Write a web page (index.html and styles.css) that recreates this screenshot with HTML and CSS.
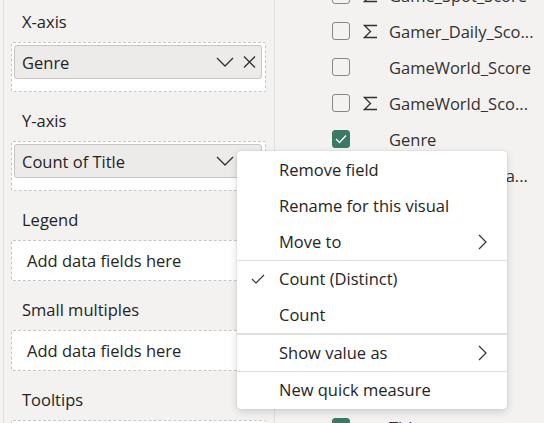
FILE: index.html
```html
<!DOCTYPE html>
<html lang="en">
<head>
<meta charset="utf-8">
<title>Visual fields</title>
<link rel="stylesheet" href="styles.css">
</head>
<body>
<div class="app">
  <div class="fields">
    <section class="well">
      <div class="well-label">X-axis</div>
      <div class="drop drop-filled">
        <div class="pill">
          <span class="pill-name">Genre</span>
          <span class="pill-icons">
            <svg class="chev-down" width="18" height="10" viewBox="0 0 18 10"><path d="M1 1L9 9L17 1" fill="none" stroke="#323130" stroke-width="1.3"/></svg>
            <svg class="close" width="13" height="12" viewBox="0 0 13 12"><path d="M1 0.5L12 11.5M12 0.5L1 11.5" fill="none" stroke="#323130" stroke-width="1.3"/></svg>
          </span>
        </div>
      </div>
    </section>
    <section class="well">
      <div class="well-label">Y-axis</div>
      <div class="drop drop-filled">
        <div class="pill">
          <span class="pill-name">Count of Title</span>
          <span class="pill-icons">
            <svg class="chev-down" width="18" height="10" viewBox="0 0 18 10"><path d="M1 1L9 9L17 1" fill="none" stroke="#323130" stroke-width="1.3"/></svg>
            <svg class="close" width="13" height="12" viewBox="0 0 13 12"><path d="M1 0.5L12 11.5M12 0.5L1 11.5" fill="none" stroke="#323130" stroke-width="1.3"/></svg>
          </span>
        </div>
      </div>
    </section>
    <section class="well">
      <div class="well-label">Legend</div>
      <div class="drop drop-empty">Add data fields here</div>
    </section>
    <section class="well">
      <div class="well-label">Small multiples</div>
      <div class="drop drop-empty">Add data fields here</div>
    </section>
    <section class="well">
      <div class="well-label">Tooltips</div>
      <div class="drop drop-empty">Add data fields here</div>
    </section>
  </div>

  <div class="data">
    <ul class="field-list">
      <li class="field"><span class="cb"></span><span class="slot"><svg width="15" height="15" viewBox="0 0 15 15"><path d="M14 1.5H1.5L7.5 7.5L1.5 13.5H14" fill="none" stroke="#323130" stroke-width="1.3"/></svg></span><span class="fname">Game_Spot_Score</span></li>
      <li class="field"><span class="cb"></span><span class="slot"><svg width="15" height="15" viewBox="0 0 15 15"><path d="M14 1.5H1.5L7.5 7.5L1.5 13.5H14" fill="none" stroke="#323130" stroke-width="1.3"/></svg></span><span class="fname">Gamer_Daily_Sco...</span></li>
      <li class="field"><span class="cb"></span><span class="slot"></span><span class="fname">GameWorld_Score</span></li>
      <li class="field"><span class="cb"></span><span class="slot"><svg width="15" height="15" viewBox="0 0 15 15"><path d="M14 1.5H1.5L7.5 7.5L1.5 13.5H14" fill="none" stroke="#323130" stroke-width="1.3"/></svg></span><span class="fname">GameWorld_Sco...</span></li>
      <li class="field"><span class="cb cb-on"><svg width="12" height="10" viewBox="0 0 12 10"><path d="M1 5L4.5 8.5L11 1.5" fill="none" stroke="#fff" stroke-width="1.4"/></svg></span><span class="slot"></span><span class="fname">Genre</span></li>
      <li class="field"><span class="cb"></span><span class="slot"><svg width="15" height="15" viewBox="0 0 15 15"><path d="M14 1.5H1.5L7.5 7.5L1.5 13.5H14" fill="none" stroke="#323130" stroke-width="1.3"/></svg></span><span class="fname">Global_Score_Va...</span></li>
      <li class="field"><span class="cb"></span><span class="slot"></span><span class="fname">Platform</span></li>
      <li class="field"><span class="cb"></span><span class="slot"></span><span class="fname">Publisher</span></li>
      <li class="field"><span class="cb"></span><span class="slot"></span><span class="fname">Rating</span></li>
      <li class="field"><span class="cb"></span><span class="slot"></span><span class="fname">Region</span></li>
      <li class="field"><span class="cb"></span><span class="slot"></span><span class="fname">Release</span></li>
      <li class="field"><span class="cb"></span><span class="slot"></span><span class="fname">Studio</span></li>
      <li class="field"><span class="cb cb-on"><svg width="12" height="10" viewBox="0 0 12 10"><path d="M1 5L4.5 8.5L11 1.5" fill="none" stroke="#fff" stroke-width="1.4"/></svg></span><span class="slot"></span><span class="fname">Title</span></li>
    </ul>
  </div>
</div>

<div class="menu" role="menu">
  <div class="menu-group">
    <div class="menu-item"><span class="mi-check"></span><span class="mi-text">Remove field</span></div>
    <div class="menu-item"><span class="mi-check"></span><span class="mi-text">Rename for this visual</span></div>
    <div class="menu-item"><span class="mi-check"></span><span class="mi-text">Move to</span><svg class="mi-sub" width="9" height="16" viewBox="0 0 9 16"><path d="M1 1L8 8L1 15" fill="none" stroke="#323130" stroke-width="1.2"/></svg></div>
  </div>
  <div class="menu-group">
    <div class="menu-item"><span class="mi-check"><svg width="14" height="10" viewBox="0 0 14 10"><path d="M1 5L5 9L13 1" fill="none" stroke="#323130" stroke-width="1.1"/></svg></span><span class="mi-text">Count (Distinct)</span></div>
    <div class="menu-item"><span class="mi-check"></span><span class="mi-text">Count</span></div>
  </div>
  <div class="menu-group menu-group-thick">
    <div class="menu-item"><span class="mi-check"></span><span class="mi-text">Show value as</span><svg class="mi-sub" width="9" height="16" viewBox="0 0 9 16"><path d="M1 1L8 8L1 15" fill="none" stroke="#323130" stroke-width="1.2"/></svg></div>
  </div>
  <div class="menu-group">
    <div class="menu-item"><span class="mi-check"></span><span class="mi-text">New quick measure</span></div>
  </div>
</div>
</body>
</html>
```

FILE: styles.css
```css
* { box-sizing: border-box; }

html, body {
  margin: 0;
  padding: 0;
}

body {
  position: relative;
  width: 544px;
  height: 423px;
  overflow: hidden;
  background: #f3f2f1;
  font-family: "Open Sans", "Noto Sans", sans-serif;
  font-size: 16.5px;
  color: #252423;
}

.app {
  display: flex;
  height: 423px;
}

/* left: field wells */
.fields {
  width: 272px;
  margin-left: 3px;
  border-left: 1px solid #e1dfdd;
  border-right: 1px solid #e1dfdd;
  padding: 12px 8px 0 7px;
  display: flex;
  flex-direction: column;
  gap: 19px;
  flex-shrink: 0;
}

.well {
  display: flex;
  flex-direction: column;
  gap: 10px;
}

.well-label {
  height: 20px;
  line-height: 20px;
  padding-left: 11px;
  white-space: nowrap;
}

.drop {
  border: 1px dashed #c8c6c4;
  border-radius: 2px;
  background: #fff;
}

.drop-filled {
  height: 50px;
  padding: 2px 3px 0 2px;
}

.drop-empty {
  height: 41px;
  display: flex;
  align-items: center;
  padding-left: 15px;
  white-space: nowrap;
}

.pill {
  height: 34px;
  border: 1px solid #c8c6c4;
  border-radius: 3px;
  background: #edebe9;
  display: flex;
  align-items: center;
  padding: 0 5px 0 7px;
}

.pill-name {
  white-space: nowrap;
}

.pill-icons {
  margin-left: auto;
  display: flex;
  align-items: center;
  gap: 9px;
}

.pill-icons svg { display: block; }

/* right: data pane */
.data {
  flex: 1;
  overflow: hidden;
  padding-left: 57px;
}

.field-list {
  list-style: none;
  margin: -23px 0 0 0;
  padding: 0;
}

.field {
  height: 36px;
  display: flex;
  align-items: center;
  white-space: nowrap;
  color: #323130;
}

.cb {
  width: 18px;
  height: 18px;
  border: 1px solid #8a8886;
  border-radius: 3px;
  background: #fff0;
  flex-shrink: 0;
  display: flex;
  align-items: center;
  justify-content: center;
}

.cb-on {
  background: #3a7a65;
  border-color: #3a7a65;
}

.cb svg { display: block; }

.slot {
  width: 39px;
  padding-left: 13px;
  flex-shrink: 0;
  display: flex;
  align-items: center;
}

.slot svg { display: block; }

/* context menu */
.menu {
  position: absolute;
  left: 237px;
  top: 151px;
  width: 270px;
  padding: 1px 0;
  background: #fff;
  border-radius: 4px;
  box-shadow: 0 0 2px rgba(0, 0, 0, 0.14), 0 3px 8px rgba(0, 0, 0, 0.14);
}

.menu-group + .menu-group {
  border-top: 1px solid #e1dfdd;
}

.menu-group-thick {
  border-top-width: 2px !important;
}

.menu-item {
  height: 36px;
  padding-bottom: 2px;
  display: flex;
  align-items: center;
  color: #252423;
  white-space: nowrap;
}

.mi-check {
  width: 42px;
  padding-left: 14px;
  padding-top: 2px;
  display: flex;
  align-items: center;
  flex-shrink: 0;
}

.mi-check svg { display: block; }

.mi-sub {
  display: block;
  margin-left: auto;
  margin-right: 20px;
  margin-top: 2px;
}
```
